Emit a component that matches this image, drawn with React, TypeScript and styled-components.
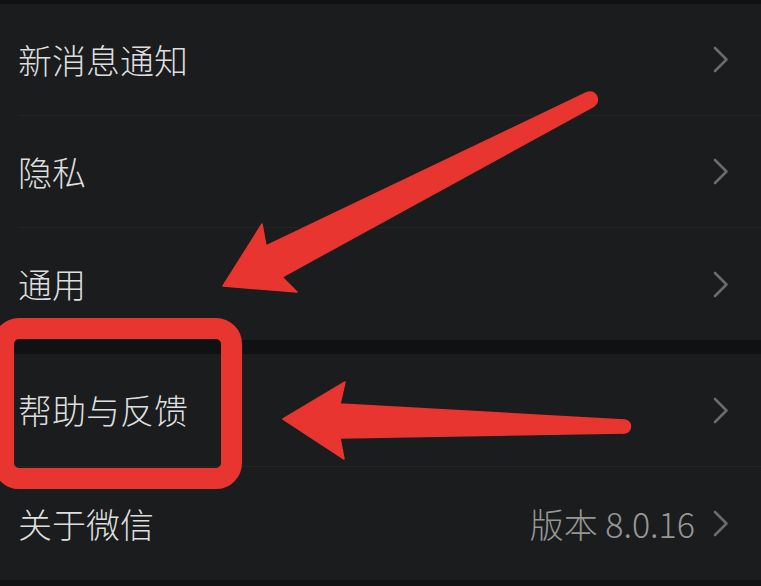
import styled, { createGlobalStyle } from "styled-components";

const GlobalStyle = createGlobalStyle`
    html, body {
        margin: 0;
        padding: 0;
        background: #0f1112;
    }
`;

type Item = {
    label: string;
    detail?: string;
}

const topItems: Item[] = [
    { label: "新消息通知" },
    { label: "隐私" },
    { label: "通用" },
];

const bottomItems: Item[] = [
    { label: "帮助与反馈" },
    { label: "关于微信", detail: "版本 8.0.16" },
];

const Page = styled.div`
    position: relative;
    width: 761px;
    height: 586px;
    overflow: hidden;
    background: #0f1112;
    padding-top: 4px;
    box-sizing: border-box;
    font-family: "Noto Sans CJK SC", "Noto Sans", sans-serif;
    font-weight: 300;
`;

const Group = styled.div<{ $gap?: number }>`
    background: #1a1c1e;
    margin-top: ${(p) => p.$gap ?? 0}px;
`;

const Row = styled.div<{ $height: number }>`
    display: flex;
    align-items: center;
    height: ${(p) => p.$height}px;
    box-sizing: border-box;
    margin-left: 18px;
    padding-right: 32px;

    &:not(:last-child) {
        border-bottom: 1px solid #222426;
    }
`;

const Label = styled.span`
    flex: 1;
    font-size: 34px;
    color: #dedede;
    line-height: 1;
`;

const Detail = styled.span`
    font-size: 34px;
    color: #969696;
    line-height: 1;
    margin-right: 18px;
`;

const Chevron = styled.svg`
    width: 16px;
    height: 27px;
    flex: none;
`;

const Highlight = styled.div`
    position: absolute;
    left: -7px;
    top: 318px;
    width: 249px;
    height: 171px;
    box-sizing: border-box;
    border: 21px solid #e8352f;
    border-radius: 26px;
`;

const Arrows = styled.svg`
    position: absolute;
    left: 0;
    top: 0;
    width: 761px;
    height: 586px;
    pointer-events: none;
`;

const ChevronIcon = () => (
    <Chevron viewBox="0 0 16 27">
        <path d="M2 2 L13.5 13.5 L2 25" fill="none" stroke="#6b6b6b" strokeWidth="2.6" strokeLinecap="round" strokeLinejoin="round" />
    </Chevron>
);

const SettingRow = ({ label, detail, height }: Item & { height: number }) => (
    <Row $height={height}>
        <Label>{label}</Label>
        {detail && <Detail>{detail}</Detail>}
        <ChevronIcon />
    </Row>
);

const App = () => {
    return (
        <Page>
            <GlobalStyle />
            <Group>
                {topItems.map((i) => (
                    <SettingRow key={i.label} {...i} height={112} />
                ))}
            </Group>
            <Group $gap={14}>
                {bottomItems.map((i) => (
                    <SettingRow key={i.label} {...i} height={113} />
                ))}
            </Group>

            <Highlight />
            <Arrows viewBox="0 0 761 586">
                <g fill="#e8352f" stroke="#e8352f" strokeWidth="1.5" strokeLinejoin="round">
                    <polygon points="223,286 262,224 266,246 586,93 594,106 282,277 297,292" />
                    <circle cx="590" cy="99.5" r="7.5" />
                    <polygon points="283,419 345,382 340,404 624,420 624,433 340,438 344,459" />
                    <circle cx="624" cy="426.5" r="6.5" />
                </g>
            </Arrows>
        </Page>
    );
};

export default App;
